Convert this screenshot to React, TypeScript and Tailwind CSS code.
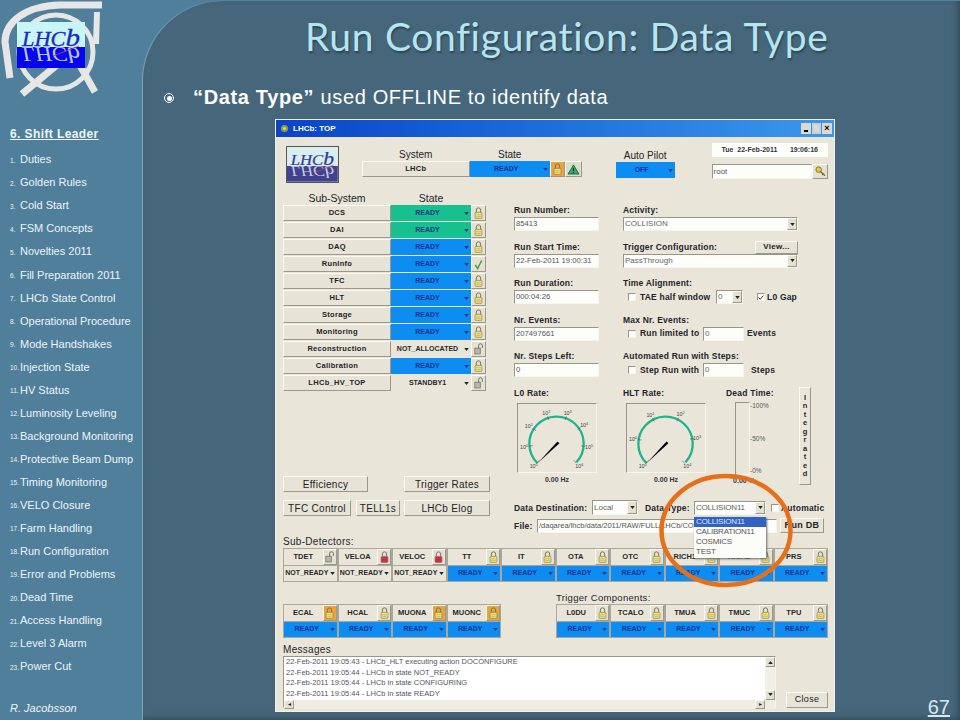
import type { ReactNode } from "react"

const MENU = [
  "Duties", "Golden Rules", "Cold Start", "FSM Concepts", "Novelties 2011", "Fill Preparation 2011",
  "LHCb State Control", "Operational Procedure", "Mode Handshakes", "Injection State", "HV Status",
  "Luminosity Leveling", "Background Monitoring", "Protective Beam Dump", "Timing Monitoring",
  "VELO Closure", "Farm Handling", "Run Configuration", "Error and Problems", "Dead Time",
  "Access Handling", "Level 3 Alarm", "Power Cut",
]

type LockKind = "lock" | "open" | "red" | "check"

const SUB_SYSTEMS: Array<{ name: string; state: string; color: string; lock: LockKind }> = [
  { name: "DCS", state: "READY", color: "green", lock: "lock" },
  { name: "DAI", state: "READY", color: "green", lock: "lock" },
  { name: "DAQ", state: "READY", color: "blue", lock: "lock" },
  { name: "RunInfo", state: "READY", color: "blue", lock: "check" },
  { name: "TFC", state: "READY", color: "blue", lock: "lock" },
  { name: "HLT", state: "READY", color: "blue", lock: "lock" },
  { name: "Storage", state: "READY", color: "blue", lock: "lock" },
  { name: "Monitoring", state: "READY", color: "blue", lock: "lock" },
  { name: "Reconstruction", state: "NOT_ALLOCATED", color: "gray", lock: "open" },
  { name: "Calibration", state: "READY", color: "blue", lock: "lock" },
  { name: "LHCb_HV_TOP", state: "STANDBY1", color: "gray", lock: "open" },
]

const DETECTORS: Array<{ name: string; state: string; lock: LockKind; hot?: boolean }> = [
  { name: "TDET", state: "NOT_READY", lock: "open" },
  { name: "VELOA", state: "NOT_READY", lock: "red" },
  { name: "VELOC", state: "NOT_READY", lock: "red" },
  { name: "TT", state: "READY", lock: "lock" },
  { name: "IT", state: "READY", lock: "lock" },
  { name: "OTA", state: "READY", lock: "lock" },
  { name: "OTC", state: "READY", lock: "lock" },
  { name: "RICH1", state: "READY", lock: "lock" },
  { name: "RICH2", state: "READY", lock: "lock" },
  { name: "PRS", state: "READY", lock: "lock" },
]

const CALO: Array<{ name: string; state: string; lock: LockKind; hot?: boolean }> = [
  { name: "ECAL", state: "READY", lock: "lock", hot: true },
  { name: "HCAL", state: "READY", lock: "lock" },
  { name: "MUONA", state: "READY", lock: "lock", hot: true },
  { name: "MUONC", state: "READY", lock: "lock", hot: true },
]

const TRIGGERS: Array<{ name: string; state: string; lock: LockKind; hot?: boolean }> = [
  { name: "L0DU", state: "READY", lock: "lock" },
  { name: "TCALO", state: "READY", lock: "lock" },
  { name: "TMUA", state: "READY", lock: "lock" },
  { name: "TMUC", state: "READY", lock: "lock" },
  { name: "TPU", state: "READY", lock: "lock" },
]

const MESSAGES = [
  "22-Feb-2011 19:05:43 - LHCb_HLT executing action DOCONFIGURE",
  "22-Feb-2011 19:05:44 - LHCb in state NOT_READY",
  "22-Feb-2011 19:05:44 - LHCb in state CONFIGURING",
  "22-Feb-2011 19:05:44 - LHCb in state READY",
]

const L0_LABELS = [
  { x: 16, y: 64, e: "0" }, { x: 6, y: 44, e: "0" }, { x: 11, y: 23, e: "1" }, { x: 29, y: 9, e: "2" },
  { x: 51, y: 9, e: "3" }, { x: 68, y: 22, e: "4" }, { x: 73, y: 44, e: "5" }, { x: 63, y: 64, e: "6" },
]

const HLT_LABELS = [
  { x: 16, y: 64, e: "0" }, { x: 6, y: 36, e: "0" }, { x: 24, y: 11, e: "1" },
  { x: 55, y: 10, e: "2" }, { x: 72, y: 35, e: "3" }, { x: 62, y: 64, e: "4" },
]

const raised = "border border-t-[#fbfaf3] border-l-[#fbfaf3] border-r-[#9a988a] border-b-[#9a988a]"
const inset = "border border-t-[#98968a] border-l-[#98968a] border-r-[#f6f5ee] border-b-[#f6f5ee]"

function Logo({ top, bottom, text, mirror, className }: { top: string; bottom: string; text: string; mirror: string; className: string }) {
  return (
    <svg viewBox="0 0 68 46" className={className}>
      <rect width="68" height="25" fill={top} />
      <rect y="25" width="68" height="21" fill={bottom} />
      <text x="5" y="24" textLength="58" lengthAdjust="spacingAndGlyphs" fontFamily="Liberation Serif, serif" fontStyle="italic" fontSize="20" fill={text} stroke={text} strokeWidth="0.3">
        LHC<tspan fontSize="26">b</tspan>
      </text>
      <text x="5" y="-25" textLength="58" lengthAdjust="spacingAndGlyphs" transform="scale(1,-1)" fontFamily="Liberation Serif, serif" fontStyle="italic" fontSize="20" fill={mirror}>
        LHC<tspan fontSize="23">b</tspan>
      </text>
      <path d="M36 34 L62 24" stroke="#d04060" strokeWidth="0.8" />
    </svg>
  )
}

function LockIcon({ kind }: { kind: LockKind }) {
  if (kind === "check") {
    return (
      <svg viewBox="0 0 10 12" className="h-[11px] w-[9px]">
        <path d="M1.5 6.5 L4 10.5 L8.5 1.5" fill="none" stroke="#3f9a45" strokeWidth="1.6" />
      </svg>
    )
  }
  if (kind === "open") {
    return (
      <svg viewBox="0 0 12 14" className="h-[12px] w-[10px]">
        <rect x="1" y="6" width="6.5" height="7" fill="#b8b6a8" stroke="#66665e" strokeWidth="0.8" />
        <path d="M5.5 6 V3 a2.3 2.3 0 0 1 4.6 0 V5.5" fill="none" stroke="#66665e" strokeWidth="1.1" />
      </svg>
    )
  }
  const body = kind === "red" ? "#d8263a" : "#f2e27a"
  const stroke = kind === "red" ? "#8a6a6a" : "#77734a"
  return (
    <svg viewBox="0 0 10 14" className="h-[12px] w-[9px]">
      <path d="M2.5 6.5 V3.5 a2.5 2.5 0 0 1 5 0 V6.5" fill="none" stroke={stroke} strokeWidth="1.1" />
      <rect x="1" y="6.3" width="8" height="7" rx="1" fill={body} stroke={stroke} strokeWidth="0.7" />
      <path d="M2.5 9 H7.5 M2.5 11 H7.5" stroke={stroke} strokeWidth="0.4" />
    </svg>
  )
}

function Caret({ className }: { className?: string }) {
  return (
    <svg viewBox="0 0 6 4" className={`h-[3px] w-[5px] shrink-0 ${className ?? ""}`}>
      <path d="M0 0 H6 L3 4 Z" fill="currentColor" />
    </svg>
  )
}

function StateBox({ state, color, className }: { state: string; color: string; className: string }) {
  const bg = color === "green" ? "bg-[#17c08f]" : color === "blue" ? "bg-[#0d8cf2]" : "bg-[#e9e6d9]"
  const fg = color === "gray" ? "text-[#26262a]" : "text-[#17338c]"
  return (
    <div className={`flex items-center ${bg} ${fg} ${className}`}>
      <span className="flex-1 whitespace-nowrap text-center text-[7px] font-bold">{state}</span>
      <Caret className="mr-[2px]" />
    </div>
  )
}

function LockButton({ kind, hot, className }: { kind: LockKind; hot?: boolean; className: string }) {
  return (
    <div className={`flex items-center justify-center ${hot ? "bg-[#eba33c]" : "bg-[#e4e1d3]"} ${raised} ${className}`}>
      <LockIcon kind={kind} />
    </div>
  )
}

function Label({ children, className }: { children: ReactNode; className?: string }) {
  return <div className={`h-[12px] whitespace-nowrap text-[8.5px] font-bold leading-[12px] tracking-[0.2px] text-[#24242a] ${className ?? ""}`}>{children}</div>
}

function Field({ label, value }: { label: string; value: string }) {
  return (
    <div className="mb-[9.5px]">
      <Label className="mb-[1px]">{label}</Label>
      <div className={`flex h-[14px] items-center whitespace-nowrap bg-[#fdfdf9] px-[1px] text-[7.7px] text-[#55555a] ${inset}`}>{value}</div>
    </div>
  )
}

function Combo({ value, className, tall }: { value: string; className: string; tall?: boolean }) {
  return (
    <div className={`flex items-center bg-[#fdfdf9] text-[#66666a] text-[8px] ${tall ? "tracking-[-0.2px]" : ""} ${inset} ${className}`}>
      <span className="flex-1 truncate pl-[1px]">{value}</span>
      <div className={`flex h-full w-[10px] items-center justify-center bg-[#e4e1d3] text-[#222] ${raised}`}>
        <Caret />
      </div>
    </div>
  )
}

function Check({ on }: { on?: boolean }) {
  return (
    <div className={`flex h-[8px] w-[8px] shrink-0 items-center justify-center bg-[#fdfdf9] ${inset}`}>
      {on && (
        <svg viewBox="0 0 8 8" className="h-[7px] w-[7px]">
          <path d="M1 4 L3 6.5 L7 1.5" fill="none" stroke="#333" strokeWidth="1.2" />
        </svg>
      )}
    </div>
  )
}

function WinButton({ children, className }: { children: ReactNode; className: string }) {
  return (
    <div className={`flex items-center justify-center whitespace-nowrap bg-[#e7e4d7] text-[10px] tracking-[0.3px] text-[#222226] ${raised} ${className}`}>
      {children}
    </div>
  )
}

function Gauge({ labels }: { labels: Array<{ x: number; y: number; e: string }> }) {
  return (
    <div className={`ml-[3px] h-[70px] w-[80px] ${inset}`}>
      <svg viewBox="0 0 80 70" className="h-full w-full">
        <path d="M20 61 A28 28 0 1 1 60 60" fill="none" stroke="#1fb48e" strokeWidth="2.4" />
        {labels.map((l, i) => {
          const dx = l.x - 40
          const dy = l.y - 40
          const d = Math.sqrt(dx * dx + dy * dy)
          return (
            <g key={i}>
              <line x1={40 + (dx / d) * 25} y1={40 + (dy / d) * 25} x2={40 + (dx / d) * 29} y2={40 + (dy / d) * 29} stroke="#44544e" strokeWidth="0.6" />
              <text x={l.x} y={l.y + 2} textAnchor="middle" fontFamily="Liberation Sans, sans-serif" fontSize="5.5" fill="#444">
                10
                <tspan dy="-2" fontSize="4">{l.e}</tspan>
              </text>
            </g>
          )
        })}
        <path d="M20 61 L40.5 38.5 L42.5 40.5 Z" fill="#000" />
      </svg>
    </div>
  )
}

function DetectorCell({ name, state, lock, hot }: { name: string; state: string; lock: LockKind; hot?: boolean }) {
  const ready = state === "READY"
  return (
    <div className="flex flex-col border border-[#a9a799]">
      <div className="flex h-[16px] items-center">
        <span className="flex-1 text-center text-[7.5px] font-bold text-[#26262a]">{name}</span>
        <LockButton kind={lock} hot={hot} className="h-[16px] w-[14px]" />
      </div>
      <StateBox state={state} color={ready ? "blue" : "gray"} className="h-[16px] border-t border-[#a9a799]" />
    </div>
  )
}

function DetectorGrid({ items, className }: { items: Array<{ name: string; state: string; lock: LockKind; hot?: boolean }>; className: string }) {
  return (
    <div className={`grid ${className}`}>
      {items.map((d) => (
        <DetectorCell key={d.name} {...d} />
      ))}
    </div>
  )
}

function Sidebar() {
  return (
    <div className="flex w-[143px] shrink-0 flex-col text-[#eef4f7]">
      <div className="relative h-[124px]">
        <svg viewBox="0 0 104 100" className="absolute left-0 top-0 h-[100px] w-[104px]">
          <g fill="none" stroke="#e6e6e6">
            <path d="M102 5 H60 C25 6 5 22 5 42 L10 78" strokeWidth="7" />
            <circle cx="56" cy="52" r="37" strokeWidth="5" />
            <path d="M97 12 L96 44" strokeWidth="6" />
            <path d="M22 94 L75 50" strokeWidth="7" />
            <path d="M95 92 L78 62" strokeWidth="7" />
          </g>
        </svg>
        <Logo top="#c8f6f4" bottom="#0505ee" text="#1c28c8" mirror="#b8c8ff" className="absolute left-[17px] top-[22px] h-[46px] w-[68px]" />
      </div>
      <div className="ml-[10px] h-[20px] text-[12px] font-bold leading-[20px] tracking-[0.4px] underline">6. Shift Leader</div>
      <div className="mt-[4px] flex flex-col">
        {MENU.map((item, i) => (
          <div key={item} className="flex h-[23.05px] items-center pl-[10px]">
            <span className="w-[10px] shrink-0 pt-[2px] text-[6.5px]">{i + 1}.</span>
            <span className="whitespace-nowrap text-[11px]">{item}</span>
          </div>
        ))}
      </div>
      <div className="ml-[10px] mt-[22px] text-[11px] italic">R. Jacobsson</div>
    </div>
  )
}

function ControlWindow() {
  return (
    <div className="relative ml-[132px] h-[593px] w-[560px] border border-[#f3f1e6] bg-[#e9e6d9]">
      <div className="flex h-[17px] items-center bg-gradient-to-r from-[#0c42c8] to-[#3c98ec] pl-[4px] pr-[2px]">
        <svg viewBox="0 0 10 10" className="h-[9px] w-[9px]">
          <circle cx="5" cy="5" r="4" fill="#8aa040" />
          <circle cx="5" cy="5" r="1.8" fill="#e8c860" />
        </svg>
        <span className="ml-[4px] flex-1 text-[8px] font-bold text-white">LHCb: TOP</span>
        <div className="flex h-[11px] w-[10px] items-end justify-center bg-[#dcdad0] pb-[2px]">
          <div className="h-[2px] w-[4px] bg-black" />
        </div>
        <div className="mx-[1px] h-[11px] w-[9px] border-[2px] border-[#c8d0d8] bg-[#dcdad0]" />
        <div className="flex h-[11px] w-[10px] items-center justify-center bg-[#dcdad0] text-[9px] font-bold leading-none text-black">×</div>
      </div>

      <div className="pl-[7px] pr-[6px]">
        <div className="flex h-[52px]">
          <Logo top="#d9eeee" bottom="#41418f" text="#2e3aa0" mirror="#c8cce0" className="ml-[3px] mt-[9px] h-[37px] w-[53px] border border-[#55555a]" />
          <div className="ml-[23px] mt-[12px] w-[221px]">
            <div className="flex h-[12px] text-[10px] leading-[12px] text-[#24242a]">
              <span className="w-[108px] text-center">System</span>
              <span className="w-[80px] text-center">State</span>
            </div>
            <div className="flex h-[16px]">
              <WinButton className="w-[108px] !text-[7.5px] font-bold">LHCb</WinButton>
              <StateBox state="READY" color="blue" className="w-[80px]" />
              <LockButton kind="lock" hot className="w-[15px]" />
              <div className={`flex w-[17px] items-center justify-center bg-[#d8e0c8] ${raised}`}>
                <svg viewBox="0 0 14 12" className="h-[11px] w-[13px]">
                  <path d="M7 1 L13 11 H1 Z" fill="#2fae6f" stroke="#1f3f2f" strokeWidth="0.8" />
                  <path d="M7 4.5 V8 M7 9 V10" stroke="#111" strokeWidth="1.2" />
                </svg>
              </div>
            </div>
          </div>
          <div className="ml-[34px] mt-[13px] w-[59px]">
            <div className="h-[12px] whitespace-nowrap text-center text-[10px] leading-[12px] text-[#24242a]">Auto Pilot</div>
            <StateBox state="OFF" color="blue" className="h-[16px]" />
          </div>
          <div className="ml-[37px] mt-[6px] w-[117px]">
            <div className="flex h-[14px] items-center justify-between bg-[#fdfdf9] px-[10px] text-[7px] font-bold text-[#333338]">
              <span>Tue&nbsp; 22-Feb-2011</span>
              <span>19:06:16</span>
            </div>
            <div className="mt-[7px] flex h-[15px]">
              <div className={`flex flex-1 items-center bg-[#fdfdf9] px-[1px] text-[8px] text-[#55555a] ${inset}`}>root</div>
              <div className={`flex w-[16px] items-center justify-center bg-[#e4e1d3] ${raised}`}>
                <svg viewBox="0 0 12 12" className="h-[11px] w-[11px]">
                  <circle cx="4" cy="4" r="3" fill="#dfc92c" stroke="#6a6020" strokeWidth="0.8" />
                  <path d="M6 6 L11 10.5 M9 8.5 L8 10" stroke="#6a6020" strokeWidth="1.4" />
                </svg>
              </div>
            </div>
          </div>
        </div>

        <div className="flex h-[345px]">
          <div className="flex h-[327px] w-[207px] flex-col">
            <div className="mb-[1px] mt-[3px] flex h-[12px] text-[10.5px] leading-[12px] text-[#24242a]">
              <span className="w-[108px] text-center">Sub-System</span>
              <span className="w-[80px] text-center">State</span>
            </div>
            <div className="flex w-[203px] flex-col gap-[1px]">
              {SUB_SYSTEMS.map((s) => (
                <div key={s.name} className="flex h-[16px]">
                  <WinButton className="w-[108px] !text-[7.5px] font-bold">{s.name}</WinButton>
                  <StateBox state={s.state} color={s.color} className="w-[80px]" />
                  <LockButton kind={s.lock} className="w-[15px]" />
                </div>
              ))}
            </div>
            <div className="mt-auto flex">
              <WinButton className="h-[16px] w-[85px]">Efficiency</WinButton>
              <WinButton className="ml-[36px] h-[16px] w-[86px]">Trigger Rates</WinButton>
            </div>
            <div className="mt-[8px] flex">
              <WinButton className="h-[16px] w-[68px]">TFC Control</WinButton>
              <WinButton className="ml-[5px] h-[16px] w-[44px]">TELL1s</WinButton>
              <WinButton className="ml-[4px] h-[16px] w-[86px]">LHCb Elog</WinButton>
            </div>
          </div>

          <div className="ml-[24px] flex-1">
            <div className="flex h-[300px]">
              <div className="w-[85px] pt-[15px]">
                <Field label="Run Number:" value="85413" />
                <Field label="Run Start Time:" value="22-Feb-2011 19:00:31" />
                <Field label="Run Duration:" value="000:04:26" />
                <Field label="Nr. Events:" value="207497661" />
                <Field label="Nr. Steps Left:" value="0" />
                <Label className="mt-[10px]">L0 Rate:</Label>
                <div className="mt-[4px]">
                  <Gauge labels={L0_LABELS} />
                </div>
                <div className="ml-[3px] mt-[2px] w-[80px] text-center text-[7px] font-bold text-[#333338]">0.00 Hz</div>
              </div>

              <div className="ml-[24px] w-[189px] pt-[15px]">
                <Label className="mb-[1px]">Activity:</Label>
                <Combo value="COLLISION" className="mb-[9.5px] h-[14px] w-[175px]" />
                <div className="flex h-[13px] w-[175px] items-start justify-between">
                  <Label>Trigger Configuration:</Label>
                  <WinButton className="h-[13px] w-[43px] !text-[8px] font-bold">View...</WinButton>
                </div>
                <Combo value="PassThrough" className="mb-[9.5px] h-[14px] w-[175px]" />
                <Label className="mb-[1px]">Time Alignment:</Label>
                <div className="mb-[9.5px] flex h-[14px] items-center whitespace-nowrap pl-[5px] text-[8.5px] font-bold tracking-[0.2px] text-[#24242a]">
                  <Check />
                  <span className="ml-[4px] w-[69px]">TAE half window</span>
                  <Combo value="0" className="ml-[7px] h-[14px] w-[27px] font-normal" />
                  <span className="ml-[14px]">
                    <Check on />
                  </span>
                  <span className="ml-[2px]">L0 Gap</span>
                </div>
                <Label className="mb-[1px]">Max Nr. Events:</Label>
                <div className="mb-[9.5px] flex h-[14px] items-center whitespace-nowrap pl-[5px] text-[8.5px] font-bold tracking-[0.2px] text-[#24242a]">
                  <Check />
                  <span className="ml-[4px] w-[61px]">Run limited to</span>
                  <div className={`ml-[2px] flex h-[14px] w-[41px] items-center bg-[#fdfdf9] px-[1px] text-[8px] font-normal text-[#66666a] ${inset}`}>0</div>
                  <span className="ml-[3px]">Events</span>
                </div>
                <Label className="mb-[1px]">Automated Run with Steps:</Label>
                <div className="mb-[9.5px] flex h-[14px] items-center whitespace-nowrap pl-[5px] text-[8.5px] font-bold tracking-[0.2px] text-[#24242a]">
                  <Check />
                  <span className="ml-[4px] w-[61px]">Step Run with</span>
                  <div className={`ml-[2px] flex h-[14px] w-[41px] items-center bg-[#fdfdf9] px-[1px] text-[8px] font-normal text-[#66666a] ${inset}`}>0</div>
                  <span className="ml-[7px]">Steps</span>
                </div>

                <div className="mt-[10px] flex">
                  <div className="w-[86px]">
                    <Label>HLT Rate:</Label>
                    <div className="mt-[4px]">
                      <Gauge labels={HLT_LABELS} />
                    </div>
                    <div className="ml-[3px] mt-[2px] w-[80px] text-center text-[7px] font-bold text-[#333338]">0.00 Hz</div>
                  </div>
                  <div className="ml-[17px] w-[73px]">
                    <Label>Dead Time:</Label>
                    <div className="ml-[9px] mt-[3px] flex h-[73px]">
                      <div className={`w-[15px] ${inset}`} />
                      <div className="flex flex-col justify-between text-[6.5px] leading-[8px] text-[#55555a]">
                        <span>-100%</span>
                        <span>-50%</span>
                        <span>-0%</span>
                      </div>
                    </div>
                    <div className="mt-[1px] w-[36px] text-center text-[7px] font-bold text-[#333338]">0.00 %</div>
                  </div>
                  <div className={`flex h-[98px] w-[12px] shrink-0 flex-col items-center justify-center text-[7.5px] font-bold leading-[8.5px] text-[#26262a] ${raised}`}>
                    {"Integrated".split("").map((c, i) => (
                      <span key={i}>{c}</span>
                    ))}
                  </div>
                </div>
              </div>
            </div>

            <div className="mt-[11px] flex h-[15px] items-center">
              <Label className="w-[78px]">Data Destination:</Label>
              <Combo value="Local" className="h-[15px] w-[46px]" />
              <Label className="ml-[7px] w-[49px]">Data Type:</Label>
              <Combo value="COLLISION11" className="h-[14px] w-[72px]" tall />
              <span className="ml-[5px]">
                <Check />
              </span>
              <Label className="ml-[2px]">Automatic</Label>
            </div>
            <div className="mt-[3px] flex h-[15px] items-center">
              <Label className="w-[23px]">File:</Label>
              <div className={`flex h-[14px] w-[240px] items-center bg-[#fdfdf9] px-[1px] text-[7.5px] text-[#55555a] ${inset}`}>
                <span className="truncate">/daqarea/lhcb/data/2011/RAW/FULL/LHCb/COLLISION11/85413</span>
              </div>
              <WinButton className="ml-[3px] h-[15px] w-[44px] !text-[9px] font-bold">Run DB</WinButton>
            </div>
          </div>
        </div>

        <div className="mt-[1px] h-[13px] text-[10px] leading-[13px] tracking-[0.3px] text-[#24242a]">Sub-Detectors:</div>
        <DetectorGrid items={DETECTORS} className="h-[34px] grid-cols-10" />

        <div className="mt-[10px] flex items-end">
          <DetectorGrid items={CALO} className="h-[34px] w-[218px] grid-cols-4" />
          <div className="ml-[55px] w-[272px]">
            <div className="h-[12px] text-[9.5px] font-normal leading-[12px] tracking-[0.3px] text-[#24242a]">Trigger Components:</div>
            <DetectorGrid items={TRIGGERS} className="h-[34px] grid-cols-5" />
          </div>
        </div>

        <div className="mt-[6px] h-[12px] text-[10px] leading-[12px] tracking-[0.3px] text-[#24242a]">Messages</div>
        <div className="flex items-end">
          <div className={`flex h-[52px] w-[493px] flex-col bg-white ${inset}`}>
            <div className="flex flex-1">
              <div className="flex-1 pl-[2px] text-[7.5px] leading-[10.7px] text-[#55555c]">
                {MESSAGES.map((m) => (
                  <div key={m} className="whitespace-nowrap">{m}</div>
                ))}
              </div>
              <div className="flex w-[10px] flex-col justify-between bg-[#f1efe6] text-[#222]">
                <div className={`flex h-[10px] items-center justify-center bg-[#e4e1d3] ${raised}`}>
                  <Caret className="rotate-180" />
                </div>
                <div className={`flex h-[10px] items-center justify-center bg-[#e4e1d3] ${raised}`}>
                  <Caret />
                </div>
              </div>
            </div>
            <div className="flex h-[9px] items-center justify-between bg-[#efeddf] text-[6px] leading-none text-[#222]">
              <span className={`flex h-[9px] w-[10px] items-center justify-center bg-[#e4e1d3] ${raised}`}>◂</span>
              <span className={`mr-[10px] flex h-[9px] w-[10px] items-center justify-center bg-[#e4e1d3] ${raised}`}>▸</span>
            </div>
          </div>
          <WinButton className="ml-[10px] h-[16px] w-[42px] !text-[9px]">Close</WinButton>
        </div>
      </div>

      <div className="absolute left-[418px] top-[397px] z-10 flex h-[41px] w-[72px] flex-col bg-[#fcfcf8] text-[8px] leading-[10px] tracking-[-0.2px] text-[#55555c] shadow-[1px_1px_2px_#666]">
        <div className="bg-[#2f62c2] pl-[2px] text-[#dfe8f6]">COLLISION11</div>
        <div className="pl-[2px]">CALIBRATION11</div>
        <div className="pl-[2px]">COSMICS</div>
        <div className="pl-[2px]">TEST</div>
      </div>
      <svg viewBox="0 0 136 115" className="absolute left-[382px] top-[353px] z-20 h-[115px] w-[136px]">
        <ellipse cx="68" cy="57.5" rx="64.5" ry="54.5" fill="none" stroke="#e66f1b" strokeWidth="4.5" />
      </svg>
    </div>
  )
}

export default function App() {
  return (
    <div className="flex h-[720px] w-[960px] overflow-hidden bg-[#4f7f9b] font-['Liberation_Sans',Arial,sans-serif]">
      <Sidebar />
      <div className="relative mt-[1px] flex-1 rounded-tl-[80px] bg-[#46677b] shadow-[-1px_0_1px_#7ea4b9,inset_-6px_0_6px_-4px_#2f4a5a,inset_0_-6px_6px_-4px_#33505f]">
        <div className="flex h-[71px] items-center pl-[162px] font-['Lato',sans-serif] text-[39px] tracking-[0.7px] text-[#b6e5f0] [text-shadow:1px_2px_2px_#2c4454]">
          Run Configuration: Data Type
        </div>
        <div className="flex h-[47px] items-start pt-[15px]">
          <div className="ml-[21px] mt-[6px] flex h-[10px] w-[10px] items-center justify-center rounded-full border border-white">
            <div className="h-[5px] w-[5px] rounded-full bg-white" />
          </div>
          <div className="ml-[19px] text-[20px] leading-[20px] tracking-[0.65px] text-white">
            <span className="font-bold">“Data Type”</span> used OFFLINE to identify data
          </div>
        </div>
        <ControlWindow />
        <div className="absolute right-[10px] top-[695px] text-[20px] leading-[22px] text-[#d7e8f1] underline">67</div>
      </div>
    </div>
  )
}
